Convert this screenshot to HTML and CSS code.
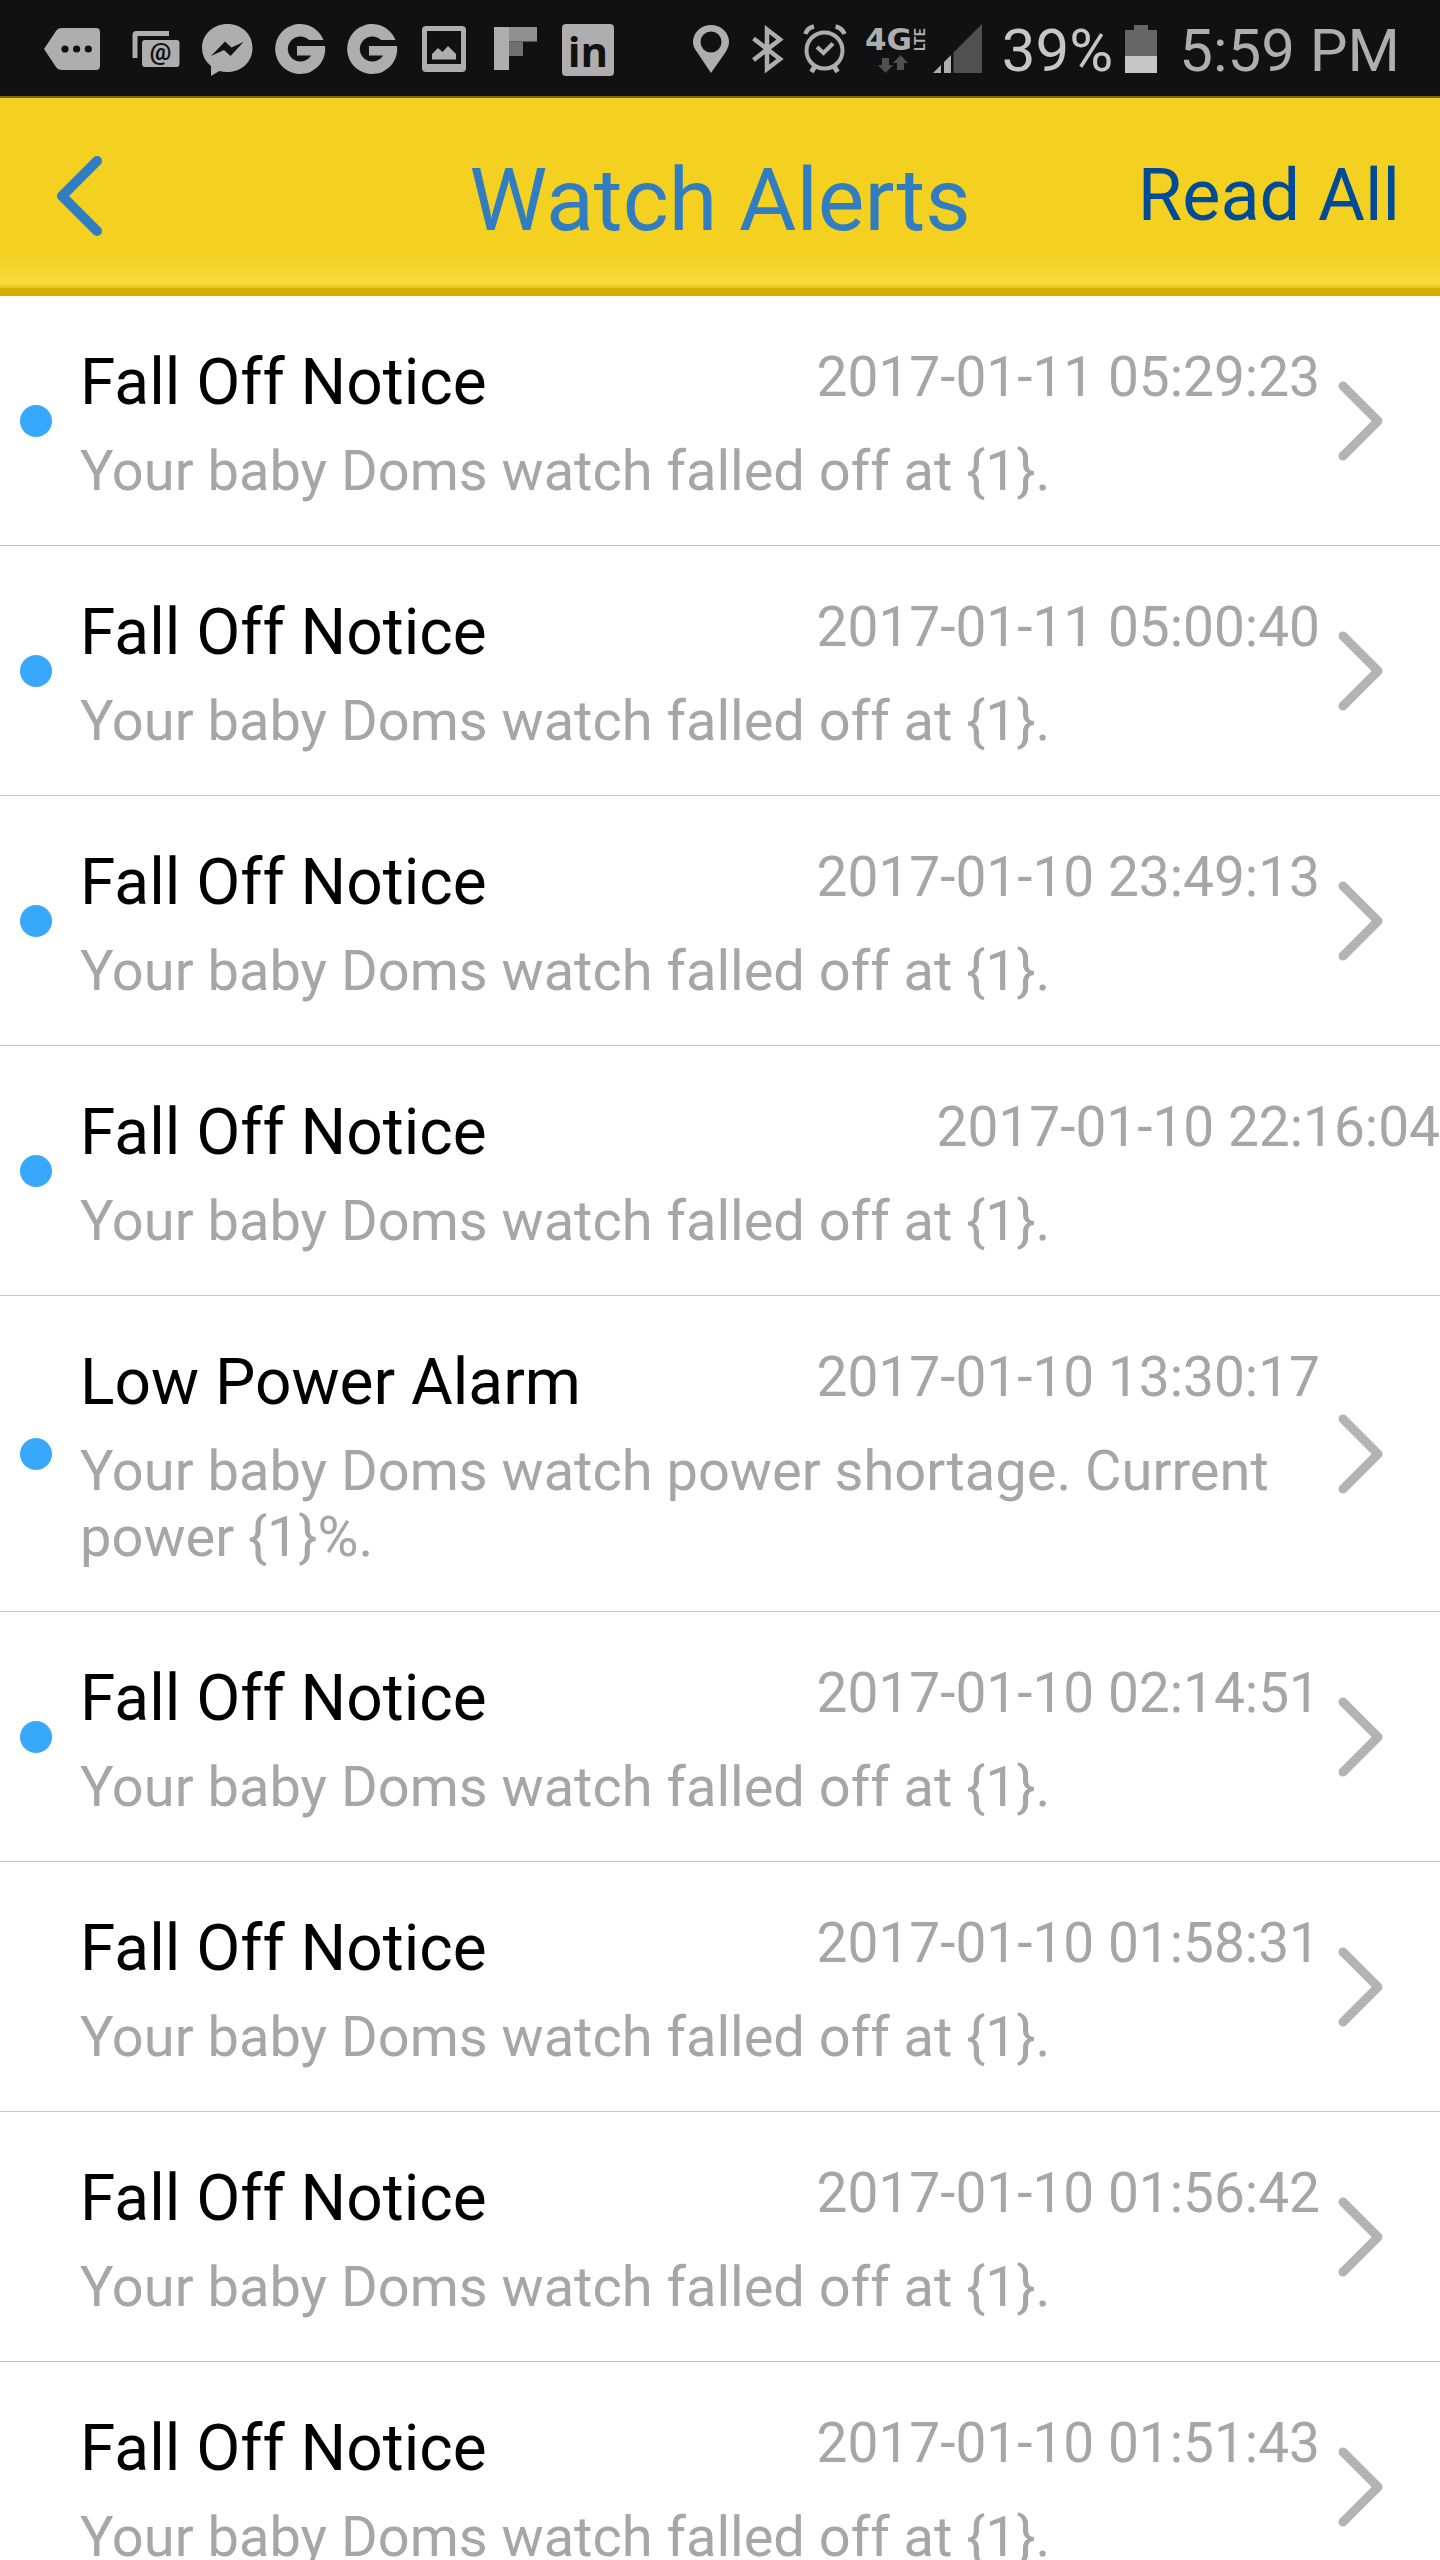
FILE: index.html
```html
<!DOCTYPE html>
<html lang="en">
<head>
    <meta charset="UTF-8">
    <meta name="viewport" content="width=device-width, initial-scale=1.0">
    <title>Watch Alerts</title>
    <link rel="stylesheet" href="styles.css">
</head>
<body>
    <!-- shared icons -->
    <svg class="defs" aria-hidden="true">
        <symbol id="arrow" viewBox="0 0 46 80">
            <path d="M5 5 L40 40 L5 75" fill="none" stroke="#b3b3b3" stroke-width="9" stroke-linecap="round" stroke-linejoin="round"/>
        </symbol>
        <symbol id="google" viewBox="0 0 72 96">
            <path d="M59.500 40 A25 25 0 1 0 61 46 H33 V55.500 H47 A12.500 12.500 0 1 1 45 40 Z"/>
        </symbol>
    </svg>

    <div class="app">
        <div class="status-bar">
            <div class="notifications">
                <svg width="84" height="96" viewBox="0 0 84 96">
                    <path fill-rule="evenodd" d="M8 49 L20 31 Q22 28 26 28 H60 Q64 28 64 32 V66 Q64 70 60 70 H26 Q22 70 20 67 Z M25.400 49 a3.600 3.600 0 1 0 7.200 0 a3.600 3.600 0 1 0 -7.200 0 M37 49 a3.600 3.600 0 1 0 7.200 0 a3.600 3.600 0 1 0 -7.200 0 M48.700 49 a3.600 3.600 0 1 0 7.200 0 a3.600 3.600 0 1 0 -7.200 0"/>
                </svg>
                <svg width="72" height="96" viewBox="0 0 72 96">
                    <path d="M12.500 58 V35 Q12.500 31 16.500 31 H49 V36 H17.500 V58 Z"/>
                    <rect x="22" y="40" width="37.500" height="27" rx="3"/>
                    <text class="mail-at" x="40.500" y="60" text-anchor="middle">@</text>
                </svg>
                <svg width="72" height="96" viewBox="0 0 72 96">
                    <path fill-rule="evenodd" d="M35.500 24 C49.500 24 60.500 34 60.500 48 C60.500 62 49.500 72 35.500 72 Q31 72 27.500 71 L19 76 V66 Q10 59 10 48 C10 34 21.500 24 35.500 24 Z M19 56 L33 41.500 L39.500 47.500 L51.500 42 L38.500 56 L32 50 Z"/>
                </svg>
                <svg width="72" height="96"><use href="#google"/></svg>
                <svg width="72" height="96"><use href="#google"/></svg>
                <svg width="72" height="96" viewBox="0 0 72 96">
                    <path fill-rule="evenodd" d="M18 26 H54 Q58 26 58 30 V68 Q58 72 54 72 H18 Q14 72 14 68 V30 Q14 26 18 26 Z M19 31 V64 H53 V31 Z"/>
                    <path d="M24 59.500 V54 L30 48 L34.500 52 L40 46 L48 54 V59.500 Z"/>
                </svg>
                <svg width="72" height="96" viewBox="0 0 72 96">
                    <rect x="14" y="27" width="15" height="43"/>
                    <rect x="29" y="27" width="28" height="14.500" fill="#909090"/>
                    <rect x="29" y="41.500" width="14" height="14.500" fill="#707070"/>
                </svg>
                <svg width="72" height="96" viewBox="0 0 72 96">
                    <rect x="10" y="24" width="52" height="52" rx="4"/>
                    <text class="linked" x="36" y="67" text-anchor="middle">in</text>
                </svg>
            </div>
            <div class="system">
                <svg width="57" height="96" viewBox="0 0 57 96">
                    <path fill-rule="evenodd" d="M28 73 L14 52 Q10 47 10 42 A18 17 0 0 1 46 42 Q46 47 42 53 Z M17.500 42 a10.500 10.500 0 1 0 21 0 a10.500 10.500 0 1 0 -21 0"/>
                </svg>
                <svg width="57" height="96" viewBox="0 0 57 96">
                    <path d="M13.500 38.500 L40 59 L27 69 V29.500 L40 39.500 L13.500 60" fill="none" stroke="#aeaeae" stroke-width="4.500"/>
                </svg>
                <svg width="57" height="96" viewBox="0 0 57 96">
                    <g fill="none" stroke="#aeaeae" stroke-width="4">
                        <circle cx="27.500" cy="50.500" r="18"/>
                        <path d="M20 47 L26.500 53 L36 43.500"/>
                        <path d="M8.500 34 Q10 28 17 26.500 M38.500 26.500 Q45 28 47.500 34" stroke-width="4.500"/>
                        <path d="M18 66 L14.500 72 M37 66 L40.500 72" stroke-width="5"/>
                    </g>
                </svg>
                <svg width="76" height="96" viewBox="0 0 76 96">
                    <text class="net" x="11" y="50">4G</text>
                    <text class="lte" transform="rotate(-90 71 51)" x="71" y="51">LTE</text>
                    <path d="M28 58 h7 v7 h4 l-7.500 8 l-7.500 -8 h4 Z M43 70 h7 v-7 h4 l-7.500 -8 l-7.500 8 h4 Z" fill="#505050"/>
                </svg>
                <svg width="56" height="96" viewBox="0 0 56 96">
                    <path d="M3 73 L11 65 V73 Z M14 73 V62 L21 55 V73 Z"/>
                    <path d="M23.500 73 V52.500 L52 24 V73 Z" fill="#505050"/>
                </svg>
                <span class="percent">39%</span>
                <svg class="battery" width="32" height="96" viewBox="0 0 32 96">
                    <path d="M0 30 H9 V25 H23 V30 H32 V56 H0 Z" fill="#666666"/>
                    <rect y="56" width="32" height="17" fill="#c6c6c6"/>
                </svg>
                <span class="clock">5:59 PM</span>
            </div>
        </div>

        <header class="title-bar">
            <button class="back-btn" aria-label="Back">
                <svg width="46" height="80" viewBox="0 0 46 80">
                    <path d="M41 5 L6 40 L41 75" fill="none" stroke="#307dc2" stroke-width="10" stroke-linecap="round" stroke-linejoin="round"/>
                </svg>
            </button>
            <h1>Watch Alerts</h1>
            <button class="read-btn">Read All</button>
        </header>

        <ul class="alerts">
            <li><a class="alert unread" href="#">
                <div class="info">
                    <div class="top"><h2>Fall Off Notice</h2><time>2017-01-11 05:29:23</time></div>
                    <p>Your baby Doms watch falled off at {1}.</p>
                </div>
                <svg class="arrow"><use href="#arrow"/></svg>
            </a></li>
            <li><a class="alert unread" href="#">
                <div class="info">
                    <div class="top"><h2>Fall Off Notice</h2><time>2017-01-11 05:00:40</time></div>
                    <p>Your baby Doms watch falled off at {1}.</p>
                </div>
                <svg class="arrow"><use href="#arrow"/></svg>
            </a></li>
            <li><a class="alert unread" href="#">
                <div class="info">
                    <div class="top"><h2>Fall Off Notice</h2><time>2017-01-10 23:49:13</time></div>
                    <p>Your baby Doms watch falled off at {1}.</p>
                </div>
                <svg class="arrow"><use href="#arrow"/></svg>
            </a></li>
            <li><a class="alert unread" href="#">
                <div class="info">
                    <div class="top"><h2>Fall Off Notice</h2><time>2017-01-10 22:16:04</time></div>
                    <p>Your baby Doms watch falled off at {1}.</p>
                </div>
            </a></li>
            <li><a class="alert unread" href="#">
                <div class="info">
                    <div class="top"><h2>Low Power Alarm</h2><time>2017-01-10 13:30:17</time></div>
                    <p>Your baby Doms watch power shortage. Current power {1}%.</p>
                </div>
                <svg class="arrow"><use href="#arrow"/></svg>
            </a></li>
            <li><a class="alert unread" href="#">
                <div class="info">
                    <div class="top"><h2>Fall Off Notice</h2><time>2017-01-10 02:14:51</time></div>
                    <p>Your baby Doms watch falled off at {1}.</p>
                </div>
                <svg class="arrow"><use href="#arrow"/></svg>
            </a></li>
            <li><a class="alert" href="#">
                <div class="info">
                    <div class="top"><h2>Fall Off Notice</h2><time>2017-01-10 01:58:31</time></div>
                    <p>Your baby Doms watch falled off at {1}.</p>
                </div>
                <svg class="arrow"><use href="#arrow"/></svg>
            </a></li>
            <li><a class="alert" href="#">
                <div class="info">
                    <div class="top"><h2>Fall Off Notice</h2><time>2017-01-10 01:56:42</time></div>
                    <p>Your baby Doms watch falled off at {1}.</p>
                </div>
                <svg class="arrow"><use href="#arrow"/></svg>
            </a></li>
            <li><a class="alert" href="#">
                <div class="info">
                    <div class="top"><h2>Fall Off Notice</h2><time>2017-01-10 01:51:43</time></div>
                    <p>Your baby Doms watch falled off at {1}.</p>
                </div>
                <svg class="arrow"><use href="#arrow"/></svg>
            </a></li>
        </ul>
    </div>
</body>
</html>
```

FILE: styles.css
```css
* {
    box-sizing: border-box;
    margin: 0;
    padding: 0;
}
body {
    font-family: Roboto, "Noto Sans", sans-serif;
    background: #fff;
    color: #000;
}
.defs {
    display: none;
}
.app {
    display: flex;
    flex-direction: column;
    height: 100vh;
}

/* status bar */
.status-bar {
    display: flex;
    justify-content: space-between;
    flex-shrink: 0;
    padding: 0 40px 0 36px;
    background: #111;
    color: #aeaeae;
    fill: #aeaeae;
}
.notifications, .system {
    display: flex;
    align-items: center;
}
.percent, .clock {
    font-size: 60px;
    line-height: 96px;
    padding-top: 3px;
    height: 96px;
    white-space: nowrap;
}
.percent {
    color: #c6c6c6;
    margin-left: 16px;
}
.battery {
    margin: 0 22px 0 12px;
}
.mail-at {
    font: bold 24px Roboto, sans-serif;
    fill: #111;
}
.linked {
    font: bold 42px "Open Sans", sans-serif;
    fill: #111;
}
.net {
    font: bold 31px "DejaVu Sans", sans-serif;
}
.lte {
    font: bold 14px Roboto, sans-serif;
}

/* yellow title bar */
.title-bar {
    display: grid;
    grid-template-columns: 1fr auto 1fr;
    align-items: center;
    flex-shrink: 0;
    height: 200px;
    padding: 0 40px 2px;
    border-top: 2px solid #7a6710;
    background: linear-gradient(#f4d020 0, #f4d020 156px, #f7db3a 186px, #ecce2a 188px, #e2bf12 190px, #d8b300 190px, #d2ac00 198px);
}
.title-bar h1 {
    font-size: 88px;
    font-weight: normal;
    line-height: 104px;
    padding-top: 8px;
    color: #307dc2;
}
.title-bar button {
    background: none;
    border: none;
    cursor: pointer;
}
.title-bar .back-btn {
    justify-self: start;
    display: flex;
    padding-left: 16px;
}
.read-btn {
    justify-self: end;
    font-family: inherit;
    font-size: 72px;
    line-height: 84px;
    color: #004b97;
}

/* alert list */
.alerts {
    flex: 1;
    overflow-y: auto;
    scrollbar-width: none;
    list-style: none;
}
.alert {
    position: relative;
    display: flex;
    align-items: center;
    padding-left: 80px;
    border-bottom: 1px solid #c8c8c8;
    color: inherit;
    text-decoration: none;
}
.unread::before {
    content: "";
    position: absolute;
    left: 20px;
    top: calc(50% - 16px);
    width: 32px;
    height: 32px;
    border-radius: 50%;
    background: #38a8fc;
}
.info {
    flex: 1;
    padding: 48px 0 41px;
}
.top {
    display: flex;
    justify-content: space-between;
    margin-bottom: 16px;
}
.top h2 {
    font-size: 64px;
    font-weight: normal;
    line-height: 78px;
}
.top time, .alert p {
    font-size: 56px;
    line-height: 66px;
    color: #a6a6a6;
}
.top time {
    font-size: 55px;
}
.arrow {
    width: 46px;
    height: 80px;
    margin: 0 56px 0 18px;
}
```
